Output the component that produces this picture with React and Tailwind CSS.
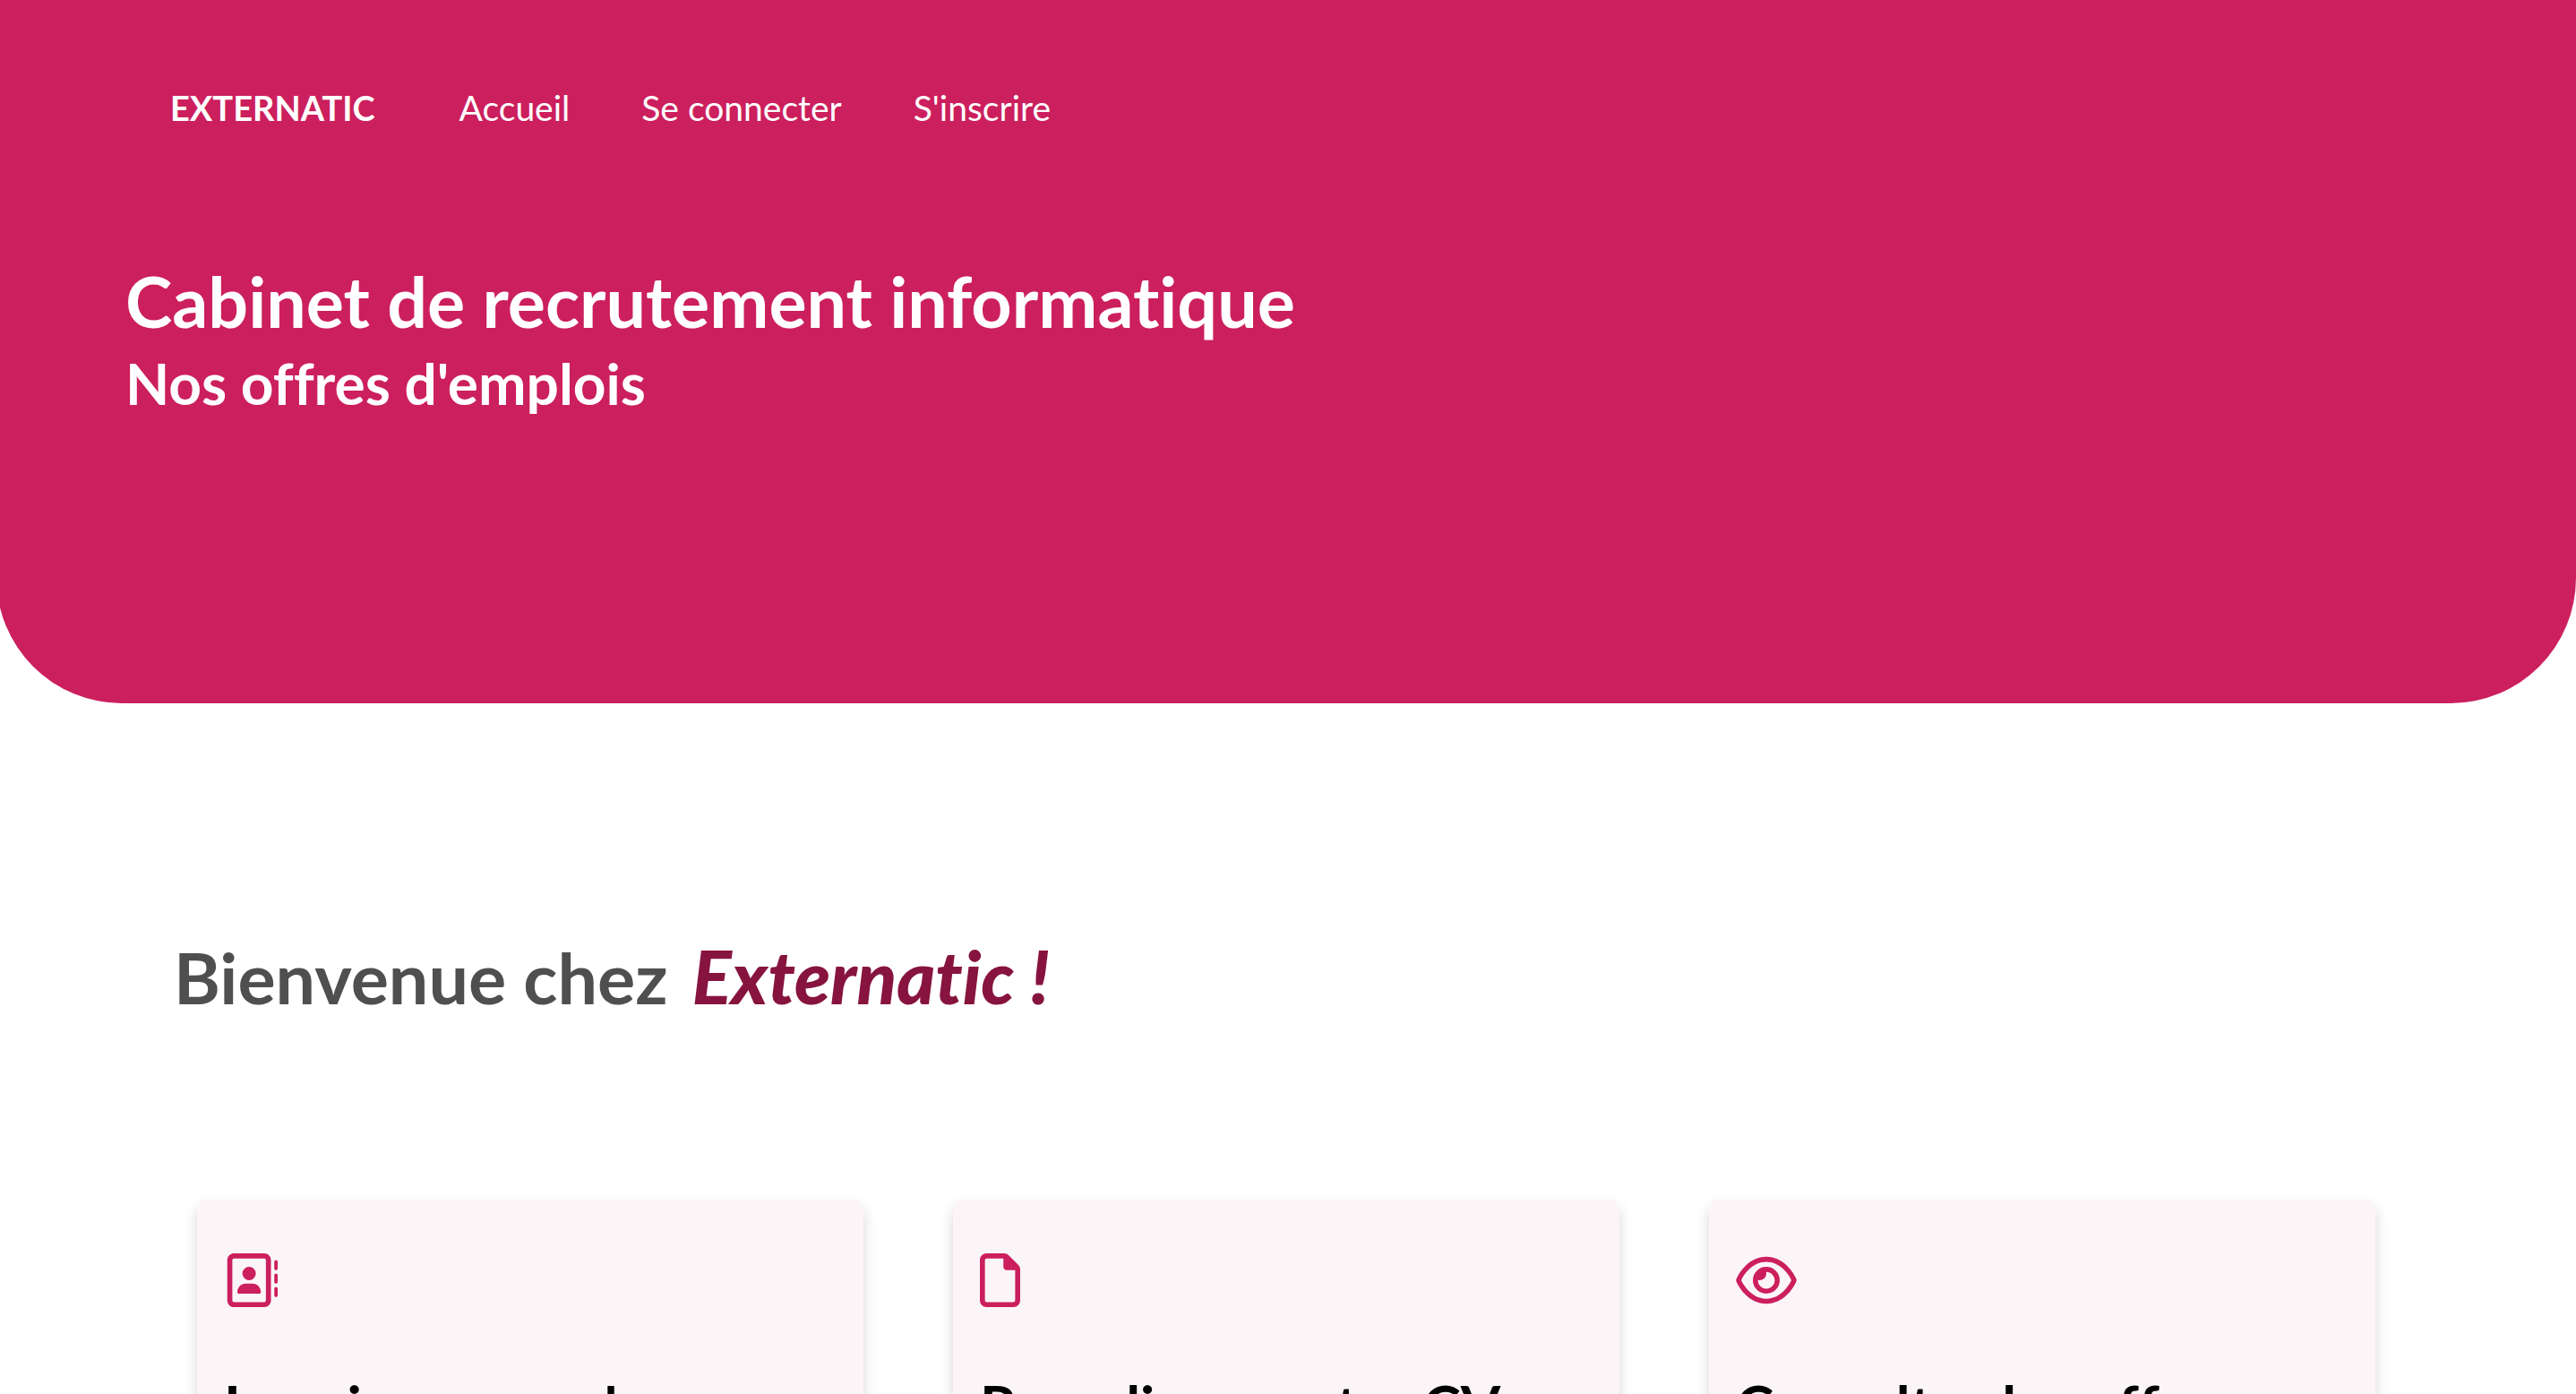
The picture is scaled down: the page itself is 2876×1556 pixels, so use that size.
import { FaRegAddressBook, FaRegEye, FaRegFile } from "react-icons/fa6";

const links = ["Accueil", "Se connecter", "S'inscrire"];

const cards = [
  { title: "Inscrivez-vous !", Icon: FaRegAddressBook, iconWidth: "w-[60px]" },
  { title: "Remplissez votre CV", Icon: FaRegFile, iconWidth: "w-[45px]" },
  { title: "Consultez les offres", Icon: FaRegEye, iconWidth: "w-[68px]" },
];

export default function App() {
  return (
    <div className="h-screen overflow-hidden bg-white font-['Lato','Open_Sans',sans-serif] [font-variant-ligatures:none]">
      <header className="-ml-1 rounded-b-[140px] bg-[#cc1f5d] pt-24 pb-[317px] text-white">
        <nav className="flex items-baseline pl-[194px] text-[39px] leading-12">
          <a href="#" className="mr-[94px] text-[38px] font-bold">EXTERNATIC</a>
          <div className="flex gap-20">
            {links.map((label) => (
              <a key={label} href="#">{label}</a>
            ))}
          </div>
        </nav>
        <div className="mt-36 pl-36">
          <h1 className="text-[79px] leading-24 font-bold">Cabinet de recrutement informatique</h1>
          <h2 className="mt-1 text-[64px] leading-20 font-bold">Nos offres d'emplois</h2>
        </div>
      </header>
      <main>
        <h2 className="mt-64 pl-[194px] text-[79px] leading-24 font-bold text-[#4f4f4f]">
          Bienvenue chez <em className="ml-2 text-[82px] font-black text-[#87143f]">Externatic !</em>
        </h2>
        <section className="mt-[200px] mr-56 ml-[220px] grid grid-cols-3 gap-[100px]">
          {cards.map(({ title, Icon, iconWidth }) => (
            <article key={title} className="rounded-xl bg-[#fbf5f7] px-[30px] pt-[60px] pb-20 shadow-[0_8px_16px_rgba(0,0,0,0.16)]">
              <Icon className={`h-[60px] text-[#cc1f5d] ${iconWidth}`} />
              <h3 className="mt-[70px] text-[64px] leading-20 font-bold text-black">{title}</h3>
            </article>
          ))}
        </section>
      </main>
    </div>
  );
}
